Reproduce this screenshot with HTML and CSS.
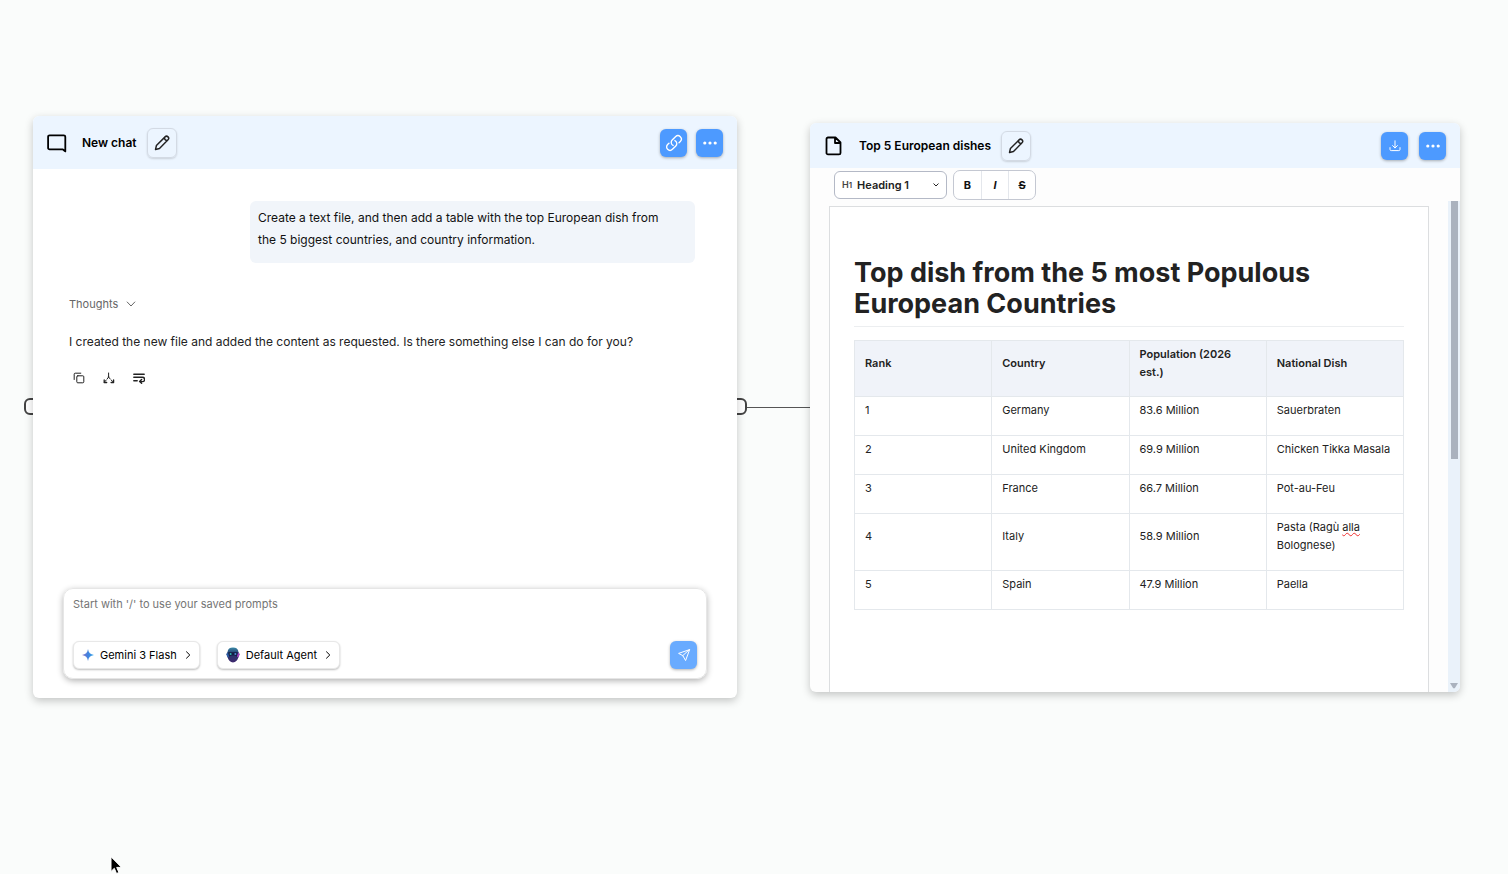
FILE: index.html
```html
<!DOCTYPE html>
<html lang="en">
<head>
  <meta charset="UTF-8">
  <meta name="viewport" content="width=device-width, initial-scale=1.0">
  <title>Canvas</title>
  <link rel="stylesheet" href="styles.css">
</head>
<body>
  <main class="canvas">

    <!-- connection between the chat and the file -->
    <span class="edge"></span>
    <span class="handle handle-left"></span>
    <span class="handle handle-right"></span>

    <!-- Chat node -->
    <section class="node chat-node">
      <header class="node-header">
        <svg class="node-icon" viewBox="0 0 20 20" width="20" height="20"><path d="M2.600 2.300h14.200a1.500 1.500 0 0 1 1.500 1.500V18.400c-1-.2-1.500-1.600-2.600-2H2.600a1.500 1.500 0 0 1-1.500-1.500V3.800a1.500 1.500 0 0 1 1.500-1.500z"/></svg>
        <h2>New chat</h2>
        <button class="edit-btn" type="button" aria-label="Rename chat">
          <svg viewBox="0 0 20 20" width="20" height="20"><path d="M2.800 17.200l1-4.400 9.600-9.600a2.300 2.300 0 0 1 3.300 3.300L7.200 16.100zM12.600 4.200c.2 1.800 1.300 3 3.200 3.200"/></svg>
        </button>
        <div class="node-actions">
          <button class="blue-btn" type="button" aria-label="Copy link">
            <svg viewBox="0 0 24 24" width="18" height="18" stroke-width="1.800"><path d="M13.200 8.700a4.500 4.500 0 0 1 1.200 7.200l-4.500 4.500a4.500 4.500 0 0 1-6.400-6.400l1.800-1.700M18.700 11.700l1.700-1.700A4.500 4.500 0 0 0 14 3.600L9.600 8.100a4.500 4.500 0 0 0 1.200 7.200"/></svg>
          </button>
          <button class="blue-btn dots" type="button" aria-label="More">
            <svg viewBox="0 0 16 16" width="16" height="16"><circle cx="2.800" cy="8" r="1.600"/><circle cx="8" cy="8" r="1.600"/><circle cx="13.200" cy="8" r="1.600"/></svg>
          </button>
        </div>
      </header>

      <div class="messages">
        <p class="user-message">Create a text file, and then add a table with the top European dish from the 5 biggest countries, and country information.</p>

        <button class="thoughts" type="button">
          Thoughts
          <svg viewBox="0 0 10 10" width="10" height="10"><path d="M1.200 3L5 7l3.800-4"/></svg>
        </button>
        <p class="answer">I created the new file and added the content as requested. Is there something else I can do for you?</p>

        <div class="message-actions">
          <button type="button" aria-label="Copy">
            <svg viewBox="0 0 12 12" width="12" height="12"><rect x="3.800" y="3.800" width="7" height="7" rx="1"/><path d="M1.200 7.500V2.200a1 1 0 0 1 1-1h5.600"/></svg>
          </button>
          <button type="button" aria-label="Branch">
            <svg viewBox="0 0 12 12" width="12" height="12"><path d="M5.600 1v4M5.600 5L4.100 7M5.600 5l1.600 2M3.200 8.100L1.500 10M8.200 8.100L10.300 10"/><path d="M1.200 8v2.500h2.500M10.600 8v2.500H8.100" stroke-width="1.300"/></svg>
          </button>
          <button type="button" aria-label="Wrap text">
            <svg viewBox="0 0 12 12" width="12" height="12"><path d="M.8 2.200h10.400M.8 5.200h8.600a2.100 2.100 0 0 1 0 4.400H7M.8 8.800h3.400M8.600 7.400L6.600 9.500l2 1.800" stroke-width="1.400"/></svg>
          </button>
        </div>
      </div>

      <form class="composer">
        <textarea rows="1" aria-label="Message" placeholder="Start with '/' to use your saved prompts"></textarea>
        <div class="composer-row">
          <button class="pill" type="button">
            <svg class="gemini" viewBox="0 0 12 12" width="12" height="12">
              <defs><linearGradient id="gem" x1="0" y1="0" x2="1" y2="0"><stop offset="0" stop-color="#8a6fc4"/><stop offset=".5" stop-color="#3f83e0"/><stop offset="1" stop-color="#35a7e8"/></linearGradient></defs>
              <path fill="url(#gem)" d="M6 0c.5 3.600 2.400 5.500 6 6-3.600.5-5.500 2.400-6 6-.5-3.600-2.400-5.500-6-6 3.600-.5 5.500-2.400 6-6z"/>
            </svg>
            Gemini 3 Flash
            <svg class="chevron" viewBox="0 0 8 8" width="8" height="8"><path d="M2.500.8L5.800 4 2.500 7.200"/></svg>
          </button>
          <button class="pill" type="button">
            <svg class="agent" viewBox="0 0 14 16" width="14" height="16">
              <defs><linearGradient id="face" x1="0" y1="0" x2="0" y2="1"><stop offset="0" stop-color="#3a8ba8"/><stop offset=".4" stop-color="#24386c"/><stop offset="1" stop-color="#40286e"/></linearGradient></defs>
              <path fill="url(#face)" d="M7 .5c3.200 0 5.300 1.500 5.400 4.300l1.200 2.400-1.300 3.600c-.8 2.500-2.700 4.700-5.300 4.700s-4.500-2.200-5.300-4.700L.4 7.200l1.200-2.400C1.700 2 3.800.5 7 .5z"/>
              <path fill="#141d45" d="M2.300 5.200h9.400l-.7 4.200-2.600-.8H5.600L3 9.400z"/>
              <circle cx="4.600" cy="7" r="1" fill="#2fb9b0"/><circle cx="9.400" cy="7" r="1" fill="#4f8fd6"/>
              <path fill="#a83fc0" d="M12.300 5.600l1.300 1.600-1.200 3-1.500-.8z"/><path fill="#2b5fa8" d="M1.700 5.600L.4 7.200l1.200 3 1.500-.8z"/>
            </svg>
            Default Agent
            <svg class="chevron" viewBox="0 0 8 8" width="8" height="8"><path d="M2.500.8L5.800 4 2.500 7.200"/></svg>
          </button>
          <button class="blue-btn send" type="submit" aria-label="Send">
            <svg viewBox="0 0 14 14" width="14" height="14"><path d="M12.300 1.700L1.600 5.400l4.200 2.200L8.400 12.200zM12.300 1.700L5.800 7.600"/></svg>
          </button>
        </div>
      </form>
    </section>

    <!-- File node -->
    <section class="node file-node">
      <header class="node-header">
        <svg class="node-icon" viewBox="0 0 20 20" width="20" height="20"><path d="M4 1.500h7.500L16.500 6.500v10.400a1.500 1.500 0 0 1-1.500 1.500H4a1.500 1.500 0 0 1-1.500-1.500V3A1.500 1.500 0 0 1 4 1.500zM11 1.800V7h5.200"/></svg>
        <h2>Top 5 European dishes</h2>
        <button class="edit-btn" type="button" aria-label="Rename file">
          <svg viewBox="0 0 20 20" width="20" height="20"><path d="M2.800 17.200l1-4.400 9.600-9.600a2.300 2.300 0 0 1 3.300 3.300L7.200 16.100zM12.600 4.200c.2 1.800 1.300 3 3.200 3.200"/></svg>
        </button>
        <div class="node-actions">
          <button class="blue-btn" type="button" aria-label="Download">
            <svg viewBox="0 0 14 14" width="14" height="14"><path d="M7 1.800v7M4.600 6.600L7 9l2.400-2.400M2 8.600v1.800a1.200 1.200 0 0 0 1.200 1.200h7.600a1.200 1.200 0 0 0 1.200-1.200V8.600"/></svg>
          </button>
          <button class="blue-btn dots" type="button" aria-label="More">
            <svg viewBox="0 0 16 16" width="16" height="16"><circle cx="2.800" cy="8" r="1.600"/><circle cx="8" cy="8" r="1.600"/><circle cx="13.200" cy="8" r="1.600"/></svg>
          </button>
        </div>
      </header>

      <div class="toolbar">
        <label class="block-type">
          <span class="block-icon">H<small>1</small></span>
          <select aria-label="Block type">
            <option>Heading 1</option>
            <option>Heading 2</option>
            <option>Paragraph</option>
          </select>
          <svg viewBox="0 0 6 6" width="6" height="6"><path d="M.8 1.800L3 4l2.200-2.200"/></svg>
        </label>
        <div class="format-group">
          <button type="button" aria-label="Bold"><b>B</b></button>
          <button type="button" aria-label="Italic"><i>I</i></button>
          <button type="button" aria-label="Strikethrough"><s>S</s></button>
        </div>
      </div>

      <div class="editor">
        <article class="page">
          <h1>Top dish from the 5 most Populous European Countries</h1>
          <table>
            <thead>
              <tr><th>Rank</th><th>Country</th><th>Population (2026 est.)</th><th>National Dish</th></tr>
            </thead>
            <tbody>
              <tr><td>1</td><td>Germany</td><td>83.6 Million</td><td>Sauerbraten</td></tr>
              <tr><td>2</td><td>United Kingdom</td><td>69.9 Million</td><td>Chicken Tikka Masala</td></tr>
              <tr><td>3</td><td>France</td><td>66.7 Million</td><td>Pot-au-Feu</td></tr>
              <tr><td>4</td><td>Italy</td><td>58.9 Million</td><td>Pasta (Ragù <span class="misspelled">alla</span> Bolognese)</td></tr>
              <tr><td>5</td><td>Spain</td><td>47.9 Million</td><td>Paella</td></tr>
            </tbody>
          </table>
        </article>
        <div class="scrollbar">
          <span class="thumb"></span>
          <svg viewBox="0 0 8 6" width="8" height="6"><path d="M0 0h8L4.800 5.200H3.200z"/></svg>
        </div>
      </div>
    </section>

    <svg class="pointer" viewBox="0 0 12 19" width="12" height="19"><path d="M1 1v14.500l3.300-3.200 2.200 5.200 2.400-1-2.200-5.100h4.600z"/></svg>
  </main>
</body>
</html>
```

FILE: styles.css
```css
* {
  box-sizing: border-box;
}

body {
  margin: 0;
  background-color: #fafcfb;
  color: #222;
  font-family: Inter, "Liberation Sans", sans-serif;
  font-size: 12px;
}

h1,
h2,
p {
  margin: 0;
}

button,
select,
textarea {
  font: inherit;
  color: inherit;
  margin: 0;
  padding: 0;
  border: none;
  background: none;
}

button {
  display: flex;
  align-items: center;
  justify-content: center;
  cursor: pointer;
}

svg {
  display: block;
  flex: none;
  fill: none;
  stroke: currentColor;
  stroke-linecap: round;
  stroke-linejoin: round;
}

.canvas {
  position: relative;
  min-height: 100vh;
  overflow: hidden;
}

/* Nodes */
.node {
  position: absolute;
  display: flex;
  flex-direction: column;
  overflow: hidden;
  border-radius: 6px;
  box-shadow: 0 3px 8px rgba(0, 0, 0, 0.22);
}

.chat-node {
  left: 33px;
  top: 116px;
  width: 704px;
  height: 582px;
  background-color: #fff;
}

.file-node {
  left: 810px;
  top: 123px;
  width: 650px;
  height: 569px;
  background-color: #fdfdfd;
}

.edge {
  position: absolute;
  left: 746px;
  top: 407px;
  width: 64px;
  height: 1px;
  background-color: #555;
}

.handle {
  position: absolute;
  top: 398px;
  width: 18px;
  height: 17px;
  border: 2px solid #444;
  border-radius: 6px;
  background-color: #fff;
}

.handle-left {
  left: 24px;
}

.handle-right {
  left: 729px;
}

.node-header {
  display: flex;
  flex: none;
  align-items: center;
  height: 53px;
  padding: 0 14px;
  background-color: #ecf5ff;
  color: #000;
}

.file-node .node-header {
  height: 45px;
}

.node-icon {
  stroke-width: 1.8;
}

.node-header h2 {
  margin: 0 10px 0 15px;
  font-size: 12px;
  font-weight: 600;
}

.edit-btn {
  width: 30px;
  height: 30px;
  border: 1px solid #d3dae4;
  border-radius: 6px;
  box-shadow: 0 1px 2px rgba(0, 0, 0, 0.15);
}

.edit-btn svg {
  width: 18px;
  height: 18px;
  stroke: #222;
  stroke-width: 1.6;
}

.node-actions {
  display: flex;
  gap: 9px;
  margin-left: auto;
}

.file-node .node-actions {
  gap: 11px;
}

.blue-btn {
  width: 27px;
  height: 28px;
  border-radius: 6px;
  background-color: #4d9aff;
  color: #fff;
  box-shadow: 0 1px 3px rgba(0, 0, 0, 0.3);
}

.dots svg {
  fill: #fff;
  stroke: none;
}

/* Chat */
.messages {
  display: flex;
  flex: 1;
  flex-direction: column;
  align-items: flex-start;
  padding: 32px 42px 0 36px;
}

.user-message {
  align-self: flex-end;
  width: 445px;
  padding: 6px 24px 12px 8px;
  border-radius: 6px;
  background-color: #f1f5fa;
  color: #111;
  line-height: 22px;
}

.thoughts {
  gap: 8px;
  margin-top: 32px;
  color: #666;
  font-size: 11px;
  line-height: 18px;
}

.answer {
  margin-top: 19px;
  line-height: 20px;
}

.message-actions {
  display: flex;
  gap: 18px;
  margin: 20px 0 0 4px;
}

.composer {
  display: flex;
  flex: none;
  flex-direction: column;
  height: 91px;
  margin: 0 30px 19px;
  padding: 6px 9px 9px;
  border: 1px solid #e6e6e6;
  border-radius: 10px;
  box-shadow: 0 2px 6px rgba(0, 0, 0, 0.3);
}

.composer textarea {
  flex: 1;
  resize: none;
  outline: none;
  font-size: 11px;
  line-height: 18px;
}

.composer textarea::placeholder {
  color: #757575;
}

.composer-row {
  display: flex;
  gap: 17px;
}

.pill {
  gap: 6px;
  height: 28px;
  padding: 0 7px 0 8px;
  border: 1px solid #e8e8e8;
  border-radius: 6px;
  background-color: #fff;
  color: #000;
  font-size: 11px;
  box-shadow: 0 1px 2px rgba(0, 0, 0, 0.25);
}

.pill .gemini,
.pill .agent {
  stroke: none;
}

.pill .chevron {
  margin-left: 1px;
}

.send {
  margin-left: auto;
  background-color: #69abff;
}

/* Editor */
.toolbar {
  display: flex;
  flex: none;
  align-items: center;
  gap: 6px;
  height: 33px;
  padding: 0 24px;
}

.block-type {
  display: flex;
  align-items: center;
  gap: 5px;
  width: 113px;
  height: 28px;
  padding: 0 7px;
  border: 1px solid #b4b9c6;
  border-radius: 6px;
  background-color: #fff;
  color: #222;
}

.block-icon {
  color: #444;
  font-size: 9px;
  font-weight: 600;
}

.block-icon small {
  font-size: 8px;
}

.block-type select {
  flex: 1;
  appearance: none;
  outline: none;
  font-size: 11px;
  font-weight: 600;
}

.format-group {
  display: flex;
  height: 30px;
  border: 1px solid #c4c8d2;
  border-radius: 7px;
  background-color: #fff;
}

.format-group button {
  width: 27px;
  font-size: 11px;
  color: #111;
}

.format-group button + button {
  border-left: 1px solid #e4e7ec;
}

.format-group i,
.format-group s {
  font-weight: 700;
}

.editor {
  display: flex;
  flex: 1;
  min-height: 0;
}

.page {
  flex: 1;
  margin: 5px 19px 0;
  padding: 50px 24px 0;
  border: 1px solid #dcdee0;
  border-bottom: none;
  background-color: #fff;
}

.page h1 {
  padding-bottom: 7px;
  border-bottom: 1px solid #eceef0;
  font-size: 27px;
  font-weight: 700;
  line-height: 31px;
}

.page table {
  width: 100%;
  margin-top: 13px;
  border-collapse: collapse;
  table-layout: fixed;
  font-size: 11px;
  line-height: 18px;
}

.page th,
.page td {
  padding: 4px 10px 16px;
  border: 1px solid #e4e8ec;
  text-align: left;
}

.page th {
  padding-bottom: 15px;
  background-color: #f0f3f9;
  font-weight: 600;
}

.misspelled {
  text-decoration: underline wavy #f03030 1px;
}

.scrollbar {
  display: flex;
  flex-direction: column;
  align-items: center;
  justify-content: space-between;
  width: 12px;
  padding-bottom: 3px;
  background-color: #eaf2fa;
}

.thumb {
  width: 7px;
  height: 258px;
  background-color: #aab2be;
}

.scrollbar svg {
  fill: #aab2be;
  stroke: none;
}

.pointer {
  position: absolute;
  left: 110px;
  top: 856px;
  fill: #000;
  stroke: #fff;
}
```
